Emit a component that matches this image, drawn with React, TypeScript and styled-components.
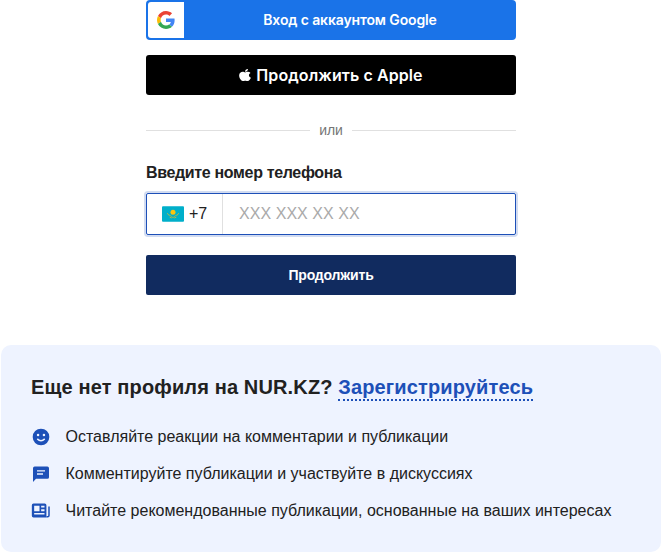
import React from 'react';
import styled, { createGlobalStyle } from 'styled-components';

const GlobalStyle = createGlobalStyle`
  * { box-sizing: border-box; }
  body {
    margin: 0;
    background: #fff;
    color: #212121;
    font-family: "Liberation Sans", Arial, sans-serif;
    overflow: hidden;
  }
`;

const Page = styled.main`
  display: flex;
  flex-direction: column;
  width: 661px;
  height: 553px;
`;

const Form = styled.form`
  display: flex;
  flex-direction: column;
  width: 370px;
  margin-left: 146px;
`;

const GoogleButton = styled.button`
  display: flex;
  align-items: center;
  height: 40px;
  padding: 2px;
  border: 0;
  border-radius: 4px;
  background: #1a73e8;
  color: #fff;
`;

const GoogleMark = styled.span`
  display: flex;
  align-items: center;
  justify-content: center;
  width: 36px;
  height: 36px;
  border-radius: 3px 0 0 3px;
  background: #fff;
`;

const GoogleLabel = styled.span`
  flex: 1;
  padding-left: 2px;
  text-align: center;
  font: 600 14px/20px Inter, sans-serif;
  letter-spacing: -0.13px;
  white-space: nowrap;
`;

const AppleButton = styled.button`
  display: flex;
  align-items: center;
  justify-content: center;
  gap: 5px;
  height: 40px;
  margin-top: 15px;
  padding: 0;
  border: 0;
  border-radius: 3px;
  background: #000;
  color: #fff;
  font: 600 16px/20px Inter, sans-serif;
  letter-spacing: 0.09px;
`;

const Divider = styled.div`
  display: flex;
  align-items: center;
  gap: 9px;
  height: 20px;
  margin-top: 25px;
  color: #757575;
  font-size: 14px;
  line-height: 20px;
  letter-spacing: -0.1px;
  &::before, &::after {
    content: "";
    flex: 1;
    height: 1px;
    background: #e0e0e0;
  }
`;

const Label = styled.label`
  margin-top: 23px;
  font-size: 16px;
  font-weight: 700;
  line-height: 20px;
  letter-spacing: -0.34px;
`;

const PhoneField = styled.div`
  display: flex;
  height: 42px;
  margin-top: 10px;
  border: 1px solid #1d50b8;
  border-radius: 2px;
  box-shadow: 0 0 0 2px #d2dcf1;
`;

const Prefix = styled.span`
  display: flex;
  align-items: center;
  gap: 5px;
  width: 76px;
  padding-left: 15px;
  border-right: 1px solid #e0e0e0;
  font-size: 16px;
`;

const PhoneInput = styled.input`
  flex: 1;
  min-width: 0;
  padding: 0 16px;
  border: 0;
  outline: 0;
  background: transparent;
  font: 16px "Liberation Sans", Arial, sans-serif;
  letter-spacing: 0.05px;
  &::placeholder { color: #aaa; opacity: 1; }
`;

const SubmitButton = styled.button`
  height: 40px;
  margin-top: 20px;
  padding: 0;
  border: 0;
  border-radius: 2px;
  background: #112b5f;
  color: #fff;
  font: 700 14px/20px "Liberation Sans", Arial, sans-serif;
  letter-spacing: -0.18px;
`;

const Panel = styled.section`
  height: 207px;
  margin: 50px 0 0 1px;
  padding: 27px 30px 0;
  border-radius: 10px;
  background: #eef3ff;
`;

const Heading = styled.h2`
  margin: 0;
  font-size: 20px;
  font-weight: 700;
  line-height: 30px;
  letter-spacing: 0.14px;
  white-space: nowrap;
`;

const RegisterLink = styled.a`
  padding-bottom: 1px;
  border-bottom: 2px dotted #1d50b8;
  color: #1d50b8;
  text-decoration: none;
`;

const Benefits = styled.ul`
  display: flex;
  flex-direction: column;
  gap: 17px;
  margin: 25px 0 0;
  padding: 0;
  list-style: none;
`;

const Benefit = styled.li`
  display: flex;
  align-items: center;
  gap: 14.5px;
  height: 20px;
  font-size: 16px;
  line-height: 20px;
  white-space: nowrap;
`;

const BenefitIcon = styled.svg`
  flex: none;
  width: 20px;
  height: 20px;
  fill: #1d50b8;
`;

const GoogleLogo = () => (
  <svg width="18" height="18" viewBox="0 0 48 48">
    <path fill="#EA4335" d="M24 9.5c3.54 0 6.71 1.22 9.21 3.6l6.85-6.85C35.9 2.38 30.47 0 24 0 14.62 0 6.51 5.38 2.56 13.22l7.98 6.19C12.43 13.72 17.74 9.5 24 9.5z" />
    <path fill="#4285F4" d="M46.98 24.55c0-1.57-.15-3.09-.38-4.55H24v9.02h12.94c-.58 2.96-2.26 5.48-4.78 7.18l7.73 6c4.51-4.18 7.09-10.36 7.09-17.65z" />
    <path fill="#FBBC05" d="M10.53 28.59A14.5 14.5 0 0 1 9.77 24c0-1.6.27-3.14.76-4.59l-7.98-6.19A24 24 0 0 0 0 24c0 3.88.92 7.54 2.56 10.78l7.97-6.19z" />
    <path fill="#34A853" d="M24 48c6.48 0 11.93-2.13 15.89-5.81l-7.73-6c-2.15 1.45-4.92 2.3-8.16 2.3-6.26 0-11.57-4.22-13.47-9.91l-7.98 6.19C6.51 42.62 14.62 48 24 48z" />
  </svg>
);

const AppleLogo = () => (
  <svg width="12" height="14" viewBox="0 0 384 512" preserveAspectRatio="none" fill="#fff">
    <path d="M318.7 268.7c-.2-36.7 16.4-64.4 50-84.8-18.8-26.9-47.2-41.7-84.7-44.6-35.5-2.8-74.3 20.7-88.5 20.7-15 0-49.4-19.7-76.4-19.7C63.3 141.2 4 184.8 4 273.5q0 39.3 14.4 81.2c12.8 36.7 59 126.7 107.2 125.2 25.2-.6 43-17.9 75.8-17.9 31.8 0 48.3 17.9 76.4 17.9 48.6-.7 90.4-82.5 102.6-119.3-65.2-30.7-61.7-90-61.7-91.9zm-56.6-164.2c27.3-32.4 24.8-61.9 24-72.5-24.1 1.4-52 16.4-67.9 34.9-17.5 19.8-27.8 44.3-25.6 71.9 26.1 2 49.9-11.4 69.5-34.3z" />
  </svg>
);

const KazakhFlag = () => (
  <svg width="22" height="16" viewBox="0 0 22 16">
    <rect y=".3" width="22" height="15.4" rx="1" fill="#00afca" />
    <circle cx="11" cy="6.2" r="2.5" fill="#fec50c" />
    <path d="M5.3 7.2c.6 2.4 3.1 1.6 4.3 3.5.5.9 2.3.9 2.8 0 1.2-1.9 3.7-1.1 4.3-3.5M7.7 11.2l2 .8M14.3 11.2l-2 .8" fill="none" stroke="#b3b947" strokeWidth="1" />
  </svg>
);

const benefits = [
  {
    text: 'Оставляйте реакции на комментарии и публикации',
    icon: (
      <>
        <circle cx="12" cy="12" r="10" />
        <circle cx="8.5" cy="9.5" r="1.5" fill="#eef3ff" />
        <circle cx="15.5" cy="9.5" r="1.5" fill="#eef3ff" />
        <path d="M7.5 14.3q4.5 4.2 9 0" fill="none" stroke="#eef3ff" strokeWidth="1.8" />
      </>
    ),
  },
  {
    text: 'Комментируйте публикации и участвуйте в дискуссиях',
    icon: <path fillRule="evenodd" d="M19.6 3H4.4a2 2 0 0 0-2 2v16.5L6 17.8h13.6a2 2 0 0 0 2-2V5a2 2 0 0 0-2-2zM7.2 7.4h9.6v1.7H7.2zm0 3.7h7.2v1.7H7.2z" />,
  },
  {
    text: 'Читайте рекомендованные публикации, основанные на ваших интересах',
    icon: (
      <>
        <path fillRule="evenodd" d="M3 3h13.5a2 2 0 0 1 2 2v14.8H3a2 2 0 0 1-2-2V5a2 2 0 0 1 2-2zm.8 2.6v6.6h6.4V5.6zm8.4 0v2.2h4V5.6zm0 4.2v2.4h4V9.8zm-8.4 4.5v2h12.4v-2z" />
        <path d="M20.7 6.5h1.8v10.8a2.5 2.5 0 0 1-2.5 2.5h-1.5v-1.8h1.2a1 1 0 0 0 1-1z" />
      </>
    ),
  },
];

export default function App() {
  return (
    <>
      <GlobalStyle />
      <Page>
        <Form>
          <GoogleButton type="button">
            <GoogleMark><GoogleLogo /></GoogleMark>
            <GoogleLabel>Вход с аккаунтом Google</GoogleLabel>
          </GoogleButton>
          <AppleButton type="button">
            <AppleLogo />
            <span>Продолжить с Apple</span>
          </AppleButton>
          <Divider>или</Divider>
          <Label htmlFor="phone">Введите номер телефона</Label>
          <PhoneField>
            <Prefix><KazakhFlag />+7</Prefix>
            <PhoneInput id="phone" type="tel" placeholder="XXX XXX XX XX" />
          </PhoneField>
          <SubmitButton type="button">Продолжить</SubmitButton>
        </Form>
        <Panel>
          <Heading>
            Еще нет профиля на NUR.KZ? <RegisterLink href="#">Зарегистрируйтесь</RegisterLink>
          </Heading>
          <Benefits>
            {benefits.map(({ text, icon }) => (
              <Benefit key={text}>
                <BenefitIcon viewBox="0 0 24 24">{icon}</BenefitIcon>
                {text}
              </Benefit>
            ))}
          </Benefits>
        </Panel>
      </Page>
    </>
  );
}
